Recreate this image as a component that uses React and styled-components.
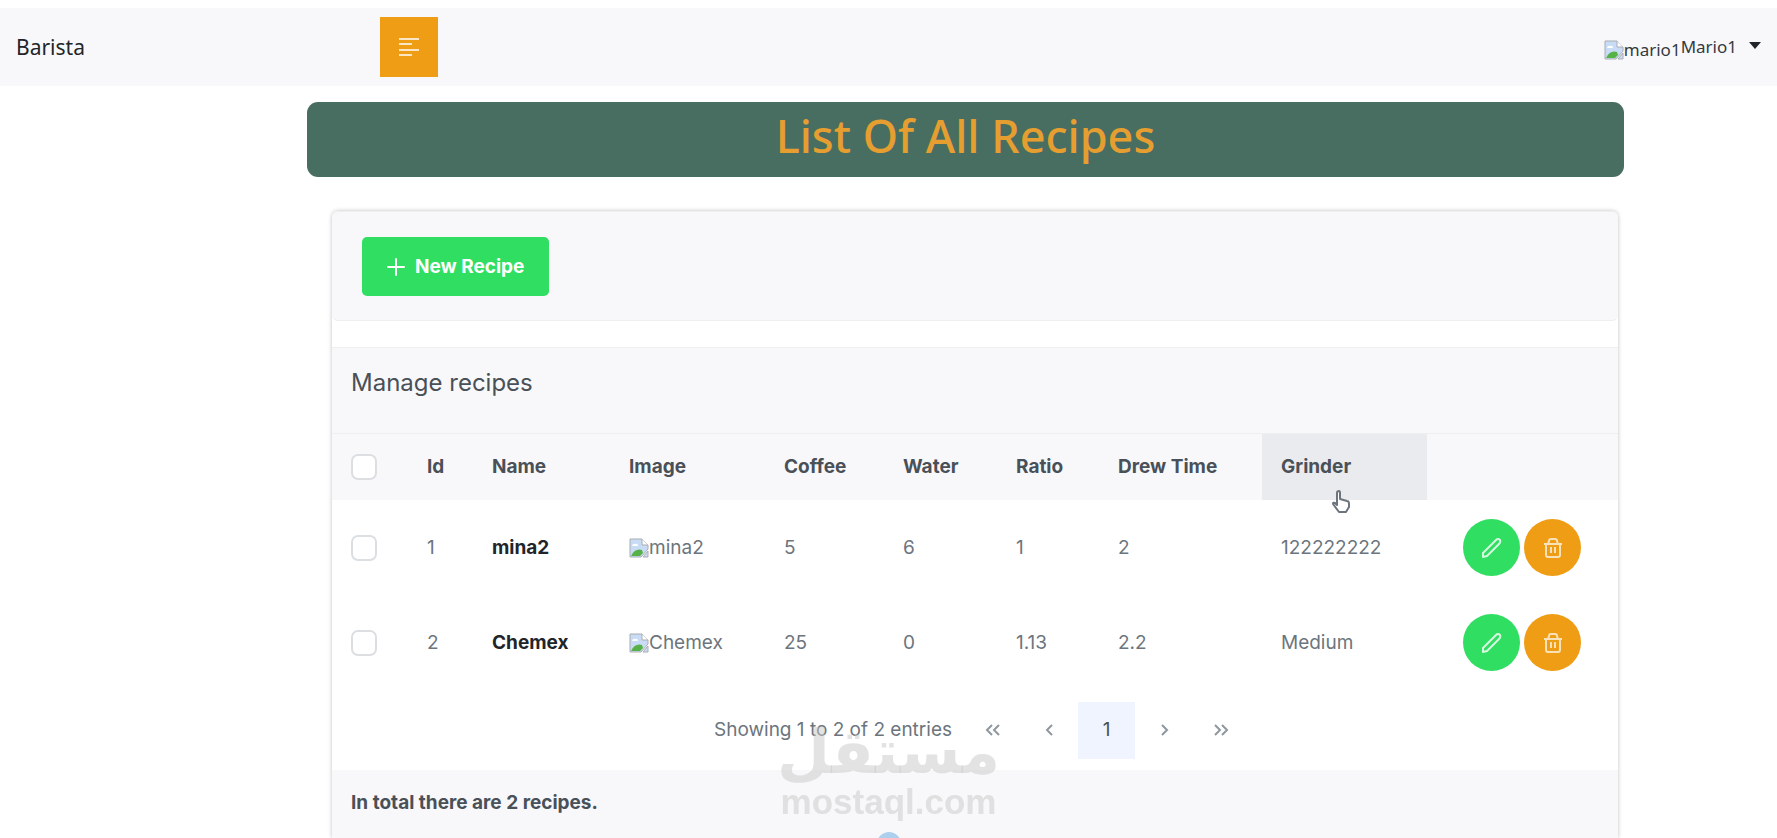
import React from 'react'
import styled, { createGlobalStyle } from 'styled-components'

const GlobalStyle = createGlobalStyle`
  *, *::before, *::after {
    box-sizing: border-box;
  }

  body {
    margin: 0;
    background: #fff;
    color: #495057;
    font-family: Inter, 'Liberation Sans', sans-serif;
    font-size: 19px;
    line-height: 24px;
  }

  button {
    border: 0;
    padding: 0;
    font: inherit;
    cursor: pointer;
  }
`

const Page = styled.div`
  padding-top: 8px;
`

const Navbar = styled.nav`
  display: flex;
  align-items: center;
  height: 78px;
  padding: 0 16px;
  background: #f8f8fb;
  color: #212529;
  font-family: 'Noto Sans', sans-serif;
`

const Brand = styled.a`
  width: 364px;
  color: inherit;
  font-size: 21px;
  text-decoration: none;
`

const MenuButton = styled.button`
  display: flex;
  align-items: center;
  justify-content: center;
  width: 58px;
  height: 60px;
  background: #ee9d14;
  color: #fff;
`

const UserMenu = styled.button`
  display: flex;
  align-items: center;
  margin-left: auto;
  background: none;
  color: #343a40;
  font-size: 17px;
`

const Avatar = styled.span`
  display: flex;
  align-items: center;
  padding-top: 5px;
`

const Caret = styled.span`
  margin: 0 0 4px 12px;
  border: 6px solid transparent;
  border-top: 7px solid #212529;
  border-bottom: 0;
`

const Main = styled.main`
  padding: 16px 153px 0 307px;
`

const Title = styled.h1`
  margin: 0;
  padding: 4px 0 11px;
  border-radius: 11px;
  background: #486e62;
  color: #e59e2f;
  font-family: 'Noto Sans', sans-serif;
  font-size: 45px;
  font-weight: 500;
  line-height: 60px;
  text-align: center;
`

const Card = styled.section`
  margin: 34px 6px 0 25px;
  border-radius: 6px 6px 0 0;
  box-shadow: 0 0 4px rgba(0, 0, 0, 0.25);
`

const Toolbar = styled.div`
  padding: 25px 30px 24px;
  border: 1px solid #eeeff1;
  border-width: 1px 0;
  border-radius: 6px;
  background: #f8f8fb;
`

const NewButton = styled.button`
  display: flex;
  align-items: center;
  gap: 10px;
  height: 59px;
  padding: 0 25px;
  border-radius: 5px;
  background: #30de62;
  color: #fff;
  font-weight: 700;
`

const TableHeading = styled.h2`
  height: 87px;
  margin: 26px 0 0;
  padding: 23px 19px;
  border: 1px solid #eeeff1;
  border-width: 1px 0;
  background: #f8f8fb;
  font-size: 24px;
  font-weight: 400;
`

const Table = styled.table`
  width: 100%;
  table-layout: fixed;
  border-collapse: collapse;
`

const HeadCell = styled.th`
  height: 66px;
  padding: 0 19px;
  background: ${props => props.$active ? '#e9ebee' : '#f8f8fb'};
  text-align: left;
  white-space: nowrap;
  cursor: pointer;
`

const Cell = styled.td`
  height: 95px;
  padding: 0 19px;
  color: ${props => props.$strong ? '#212529' : '#6c757d'};
  font-weight: ${props => props.$strong ? 700 : 400};
`

const Checkbox = styled.input`
  display: block;
  width: 26px;
  height: 26px;
  margin: 0;
  appearance: none;
  border: 2px solid #dcdfe2;
  border-radius: 7px;
  background: #fff;
`

const Picture = styled.span`
  display: flex;
  align-items: center;
`

const Actions = styled.div`
  display: flex;
  gap: 4px;
  padding-left: 17px;
`

const RoundButton = styled.button`
  display: flex;
  flex: none;
  align-items: center;
  justify-content: center;
  width: 57px;
  height: 57px;
  border-radius: 50%;
  background: ${props => props.$warning ? '#ee9d14' : '#30de62'};
  color: #fff;
`

const Paginator = styled.div`
  display: flex;
  align-items: center;
  justify-content: center;
  height: 80px;
  padding-left: 13px;
  color: #6c757d;
`

const Showing = styled.span`
  margin-right: 12px;
`

const PageButton = styled.button`
  display: flex;
  align-items: center;
  justify-content: center;
  width: 57px;
  height: 57px;
  background: ${props => props.$current ? '#eff4ff' : 'none'};
  color: ${props => props.$current ? '#495057' : '#8f979e'};
`

const Footer = styled.div`
  padding: 21px 19px 23px;
  background: #f8f8fb;
  font-weight: 700;
`

const Watermark = styled.div`
  position: fixed;
  bottom: 18px;
  left: 50%;
  transform: translateX(-50%);
  display: flex;
  flex-direction: column;
  align-items: center;
  color: rgba(200, 200, 200, 0.5);
  font-weight: 700;
  pointer-events: none;
`

const WatermarkName = styled.span`
  font-family: 'DejaVu Sans', sans-serif;
  font-size: 61px;
  line-height: 64px;
`

const WatermarkSite = styled.span`
  font-family: 'Liberation Sans', sans-serif;
  font-size: 35px;
  line-height: 36px;
`

const Dot = styled.div`
  position: fixed;
  bottom: -18px;
  left: 50%;
  width: 24px;
  height: 24px;
  margin-left: -12px;
  border-radius: 50%;
  background: #acd0ee;
`

const HeadLabel = styled.div`
  position: relative;
  margin: 0 -19px;
  padding: 21px 19px;
`

const Pointer = styled.svg`
  position: absolute;
  bottom: -14px;
  left: 69px;
`

const AlignLeftIcon = () => (
  <svg width="20" height="18" viewBox="0 0 20 18" stroke="currentColor" strokeWidth="2" opacity="0.75">
    <path d="M0 1H20M0 6H13M0 12H20M0 17H13" />
  </svg>
)

const PlusIcon = () => (
  <svg width="18" height="18" viewBox="0 0 18 18" stroke="currentColor" strokeWidth="2" strokeLinecap="round">
    <path d="M9 1V17M1 9H17" />
  </svg>
)

const PencilIcon = () => (
  <svg width="22" height="22" viewBox="0 0 22 22" fill="none" stroke="currentColor" strokeWidth="2" strokeLinejoin="round" opacity="0.8">
    <path d="M2 20L2 16L15 3Q17 1 19 3Q20 5 18 7L6 19Z" />
  </svg>
)

const TrashIcon = () => (
  <svg width="20" height="20" viewBox="0 0 20 20" fill="none" stroke="currentColor" strokeWidth="2" strokeLinejoin="round" opacity="0.7">
    <path d="M1 6H19M3 6V17Q3 19 5 19H15Q17 19 17 17V6M5 6L6 3Q6 1 8 1H12Q14 1 14 3L15 6M8 9V15M12 9V15" />
  </svg>
)

const ChevronIcon = ({ double, right }) => (
  <svg width="16" height="14" viewBox="0 0 16 14" fill="none" stroke="currentColor" strokeWidth="2" transform={right ? 'scale(-1 1)' : undefined}>
    <path d={double ? 'M7 2L2 7L7 12M14 2L9 7L14 12' : 'M10 2L5 7L10 12'} />
  </svg>
)

const BrokenImageIcon = () => (
  <svg width="20" height="20" viewBox="0 0 20 20">
    <path d="M1 1H13L19 7V11L12 19H1Z" fill="#c9dcf5" stroke="#a9adb2" />
    <path d="M13 1V7H19" fill="#fff" stroke="#a9adb2" />
    <path d="M3 8Q4 5 6 6Q9 5 9 8Z" fill="#fff" />
    <path d="M2 18Q6 10 13 12L14 15L11 18Z" fill="#56b146" />
    <path d="M19 13V19H14Z" fill="#c9dcf5" stroke="#a9adb2" />
  </svg>
)

const columns = ['Id', 'Name', 'Image', 'Coffee', 'Water', 'Ratio', 'Drew Time', 'Grinder']
const widths = [76, 65, 137, 155, 119, 113, 102, 163, 165, 191]

const recipes = [
  { id: 1, name: 'mina2', coffee: '5', water: '6', ratio: '1', time: '2', grinder: '122222222' },
  { id: 2, name: 'Chemex', coffee: '25', water: '0', ratio: '1.13', time: '2.2', grinder: 'Medium' },
]

const App = () => (
  <Page>
    <GlobalStyle />
    <Navbar>
      <Brand href="#">Barista</Brand>
      <MenuButton aria-label="Toggle menu"><AlignLeftIcon /></MenuButton>
      <UserMenu>
        <Avatar><BrokenImageIcon />mario1</Avatar>
        Mario1
        <Caret />
      </UserMenu>
    </Navbar>
    <Main>
      <Title>List Of All Recipes</Title>
      <Card>
        <Toolbar>
          <NewButton><PlusIcon />New Recipe</NewButton>
        </Toolbar>
        <TableHeading>Manage recipes</TableHeading>
        <Table>
          <colgroup>
            {widths.map((width, i) => <col key={i} style={{ width }} />)}
          </colgroup>
          <thead>
            <tr>
              <HeadCell><Checkbox type="checkbox" aria-label="Select all recipes" /></HeadCell>
              {columns.map(column => (
                <HeadCell key={column} $active={column === 'Grinder'}>
                  {column === 'Grinder' ? (
                    <HeadLabel>
                      {column}
                      <Pointer width="20" height="24" viewBox="0 0 20 24" fill="#fff" stroke="#6c757d" strokeWidth="2" strokeLinejoin="round">
                        <path d="M6 15V3Q6 1 8 1Q9 1 9 3V9L16 11Q18 11 18 14V17L15 22H8L2 14Q2 12 4 13Z" />
                      </Pointer>
                    </HeadLabel>
                  ) : column}
                </HeadCell>
              ))}
              <HeadCell />
            </tr>
          </thead>
          <tbody>
            {recipes.map(recipe => (
              <tr key={recipe.id}>
                <Cell><Checkbox type="checkbox" aria-label={`Select ${recipe.name}`} /></Cell>
                <Cell>{recipe.id}</Cell>
                <Cell $strong>{recipe.name}</Cell>
                <Cell><Picture><BrokenImageIcon />{recipe.name}</Picture></Cell>
                <Cell>{recipe.coffee}</Cell>
                <Cell>{recipe.water}</Cell>
                <Cell>{recipe.ratio}</Cell>
                <Cell>{recipe.time}</Cell>
                <Cell>{recipe.grinder}</Cell>
                <Cell>
                  <Actions>
                    <RoundButton aria-label={`Edit ${recipe.name}`}><PencilIcon /></RoundButton>
                    <RoundButton $warning aria-label={`Delete ${recipe.name}`}><TrashIcon /></RoundButton>
                  </Actions>
                </Cell>
              </tr>
            ))}
          </tbody>
        </Table>
        <Paginator>
          <Showing>Showing 1 to 2 of 2 entries</Showing>
          <PageButton aria-label="First page"><ChevronIcon double /></PageButton>
          <PageButton aria-label="Previous page"><ChevronIcon /></PageButton>
          <PageButton $current>1</PageButton>
          <PageButton aria-label="Next page"><ChevronIcon right /></PageButton>
          <PageButton aria-label="Last page"><ChevronIcon double right /></PageButton>
        </Paginator>
        <Footer>In total there are 2 recipes.</Footer>
      </Card>
    </Main>
    <Watermark>
      <WatermarkName lang="ar">مستقل</WatermarkName>
      <WatermarkSite>mostaql.com</WatermarkSite>
    </Watermark>
    <Dot />
  </Page>
)

export default App
